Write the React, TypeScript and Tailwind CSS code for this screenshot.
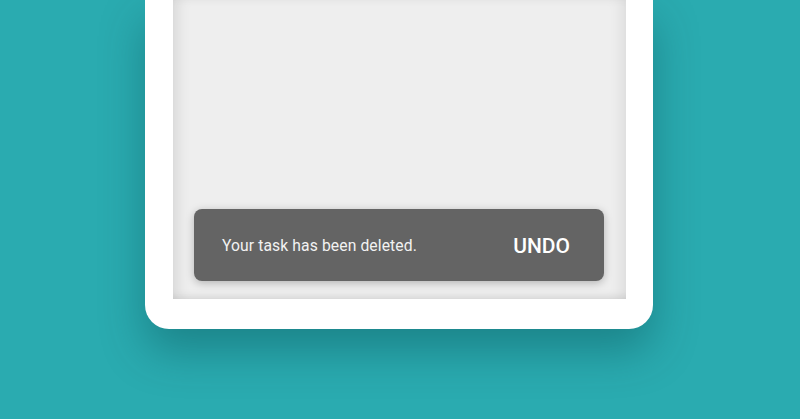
import React from "react";

export default function App() {
  return (
    <div
      className="h-[419px] w-full overflow-hidden bg-[#2aabb0] flex justify-center"
      style={{ fontFamily: "Roboto, 'Noto Sans', sans-serif" }}
    >
      <div className="w-[508px] h-[329px] mr-[2px] bg-white rounded-b-[24px] pl-[28px] pr-[27px] pb-[30px] shadow-[0_22px_44px_rgba(0,60,65,0.35)] flex">
        <div className="flex-1 bg-[#eeeeee] shadow-[inset_10px_0_14px_-6px_rgba(0,0,0,0.10),inset_-10px_0_14px_-6px_rgba(0,0,0,0.08),inset_0_-8px_10px_-6px_rgba(0,0,0,0.08)] flex flex-col justify-end pl-[21px] pr-[22px] pb-[18px]">
          <div className="h-[72px] rounded-[8px] bg-[#646464] shadow-[0_2px_8px_rgba(0,0,0,0.25)] flex items-center justify-between pl-[28px] pr-[34px] pt-[2px]">
            <span className="text-[15.7px] text-[#f2f2f2] tracking-[0.1px]">Your task has been deleted.</span>
            <span className="text-[21px] font-medium text-white pt-[1px]">UNDO</span>
          </div>
        </div>
      </div>
    </div>
  );
}
